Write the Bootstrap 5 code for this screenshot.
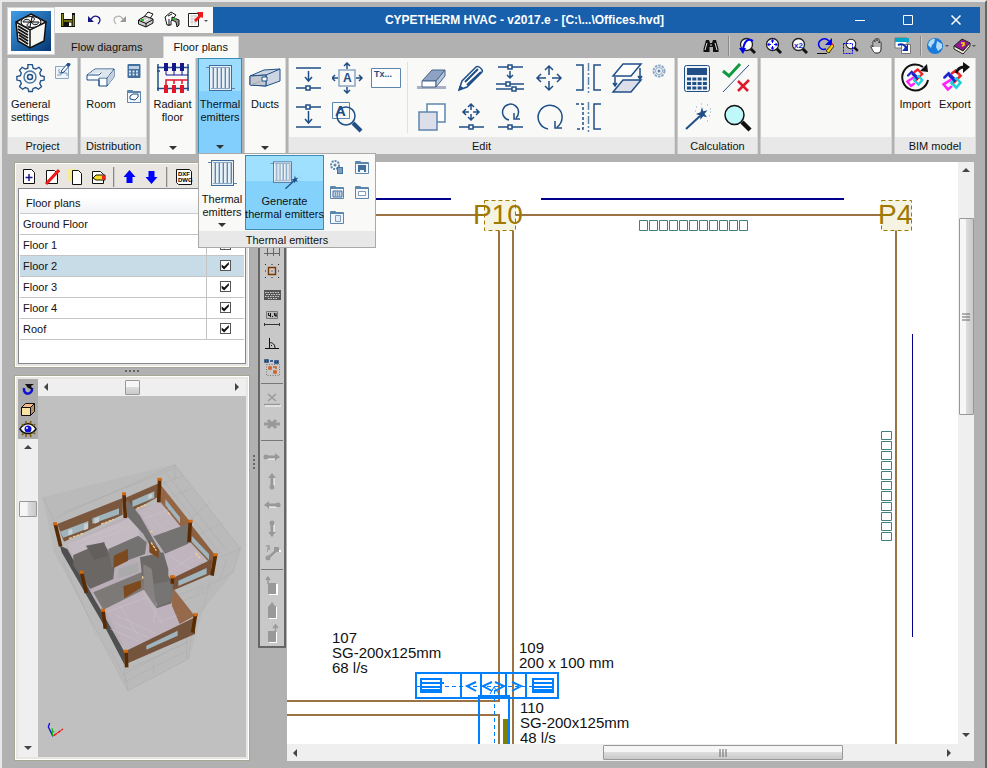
<!DOCTYPE html>
<html lang="en">
<head>
<meta charset="utf-8">
<meta name="viewport" content="width=device-width, initial-scale=1">
<title>CYPETHERM HVAC</title>
<link href="https://cdn.jsdelivr.net/npm/bootstrap@5.3.0/dist/css/bootstrap.min.css" rel="stylesheet">
<style>
:root{--ink:#1f4f86;--pane:#f9f9f8;--frame:#b1b1b1;--cap:#e8e8e8}
body{font-family:"Liberation Sans",sans-serif;font-size:11px;line-height:13px;color:#111;background:var(--frame);overflow:hidden}
button{border:0;background:none;padding:0;color:inherit;font:inherit}
svg{display:block;flex:none}
.shell{padding:5px 5px 7px 5px;border:2px solid #e8e8e8;border-right-color:#666;border-bottom:0}
.app-btn{width:48px;height:48px;background:#fff;border:1px solid #d6d6d6}
.quick{height:26px;width:158px;background:var(--pane)}
.quick button{width:26px;height:26px}
.title-strip{height:26px;background:#185fac;color:#fff;font-size:12px;font-weight:700}
.title-strip button{width:48px;height:26px}
.second-row{height:25px}
.tab-flow,.tab-floor{height:22px;padding:0 12px}
.tab-floor{background:var(--pane);border:1px solid #d8d8d8;border-bottom:0;padding:0 10px}
.view-tools button{width:26px;height:24px}
.view-tools .with-caret{width:27px}
.vbar{width:2px;height:20px;background:#8a8a8a;border-right:1px solid #ccc}
.ribbon{height:96px;gap:2px}
.rgroup{background:var(--pane);border-left:1px solid #ccc;border-right:1px solid #d9d9d9}
.rgroup .cap{height:17px;line-height:19px;background:var(--cap);text-align:center}
.big{padding-top:4px;display:flex;flex-direction:column;align-items:center;gap:4px}
.caret{width:0;height:0;border:4px solid transparent;border-top-color:#333;border-bottom:0}
.rgroup.on{background:linear-gradient(#9bdcff 0 34%,#82cffd 34%);border:1px solid #3c8cb6;border-bottom-color:#82cffd}
.drop{position:absolute;left:-1px;top:94px;width:178px;height:95px;z-index:5;background:var(--pane);border:1px solid #a9a9a9;text-align:center}
.drop .cap{height:16px;line-height:18px;background:var(--cap)}
.drop .big,.rgroup.on>.big{padding-top:3px}
.generate{width:79px;height:75px;margin-top:1px;background:linear-gradient(#9fe0ff 0 34%,#84d2fc 34%);border:1px solid #3c8cb6}
.mini-grid{display:grid;grid-template-columns:25px 25px;grid-auto-rows:25px;justify-items:center;align-items:center}
.edit-grid{display:grid;grid-auto-flow:column;grid-template-rows:32px 32px;grid-auto-columns:32px;gap:7px;padding-top:4px}
.workspace{padding:8px 6px 0 7px}
.pane-box{border:1px solid #a8a796;box-shadow:inset 0 0 0 1px #fff;background:#e9e6e1;padding:3px}
.floor-box{border:1px solid #82868f;background:#fff;padding:1px 1px 23px}
.floor-tools{height:22px;gap:7px;padding-left:3px}
.floor-table{width:100%}
.floor-table th{height:23px;font-weight:400;padding:4px 0 0 6px;background:linear-gradient(#fff 30%,#f1f2f5);border-bottom:1px solid #ccc}
.floor-table td{height:21px;padding:2px 0 0 3px;border-bottom:1px solid #c4c4c4}
.floor-table td+td{width:38px;border-left:1px solid #c4c4c4;text-align:center;padding:0}
.floor-table .sel td{background:#c8dce8}
.tick{appearance:none;width:11px;height:11px;border:1px solid #555;background:#fff;display:block;margin:0 auto}
.tick:checked::before{content:"";display:block;width:9px;height:9px;background:#111;clip-path:polygon(10% 40%,38% 62%,90% 10%,90% 38%,38% 94%,10% 70%)}
.grip{gap:2px}.grip i{width:2px;height:2px;background:#666}
.grip-row{padding:2px 0 3px}
.tool-strip{width:28px;margin-right:1px;background:#c8c8c8;border:1px solid #666;border-width:1px 2px 2px}
.tool-strip button{width:24px;height:24px;display:block}
.tool-strip hr{margin:4px 1px;height:1px;border:0;background:#777;opacity:1}
.sb{background:#efefef}
.sb button{width:17px;height:17px;display:flex;align-items:center;justify-content:center}
.sb .thumb{border:1px solid #989898;border-radius:1px;background:linear-gradient(#f6f6f6 0 45%,#dcdcdc 50%,#c9c9cb);display:flex;align-items:center;justify-content:center}
.sb-v .thumb{background:linear-gradient(90deg,#f6f6f6 0 45%,#dcdcdc 50%,#c9c9cb)}
.orbit{width:20px;background:#acacac}
.orbit button{width:20px;height:20px}
.scene{background:#c0c0c0}
.min0{min-width:0;min-height:0}
</style>
</head>
<body>
<svg width="0" height="0" class="position-absolute" aria-hidden="true">
<defs>
<g id="rad" fill="none" stroke="#1f4f86"><path d="M2 5.500H6M27 26.500H31" stroke="#5d86ad"/><rect x="5.500" y="3.500" width="22" height="25" fill="#e9f0f6" stroke="#3d6c9d"/><path d="M9.500 6v20M13.500 6v20M17.500 6v20M21.500 6v20M25.500 6v20" stroke="#5d86ad"/><path d="M8.500 6v20M12.500 6v20M16.500 6v20M20.500 6v20M24.500 6v20" stroke="#b4c8dc"/><path d="M7 5.500h19M7 26.500h19" stroke="#8aa6c2"/></g>
<g id="lens"><path d="M11 11l5 5" stroke="#111" stroke-width="3"/><circle cx="7.500" cy="7.500" r="6" fill="#fff" stroke="#222" stroke-width="1.300"/></g>
<g id="star" stroke="#1f4f86"><path d="M4 28L18 15" stroke-width="2"/><path d="M20 6l1.200 4.300 4.300-1-3 3.500 2.500 3.500-4-1-2.500 3.500-.5-4.300-4-1.500 4.500-1.700z" fill="#1f4f86" stroke="none"/><path d="M14 6h1M25 4h1M28 8h1M27 15h1M25 20h1M13 10h1M19 3h1M28 11h1" stroke="#7fa5c8"/></g>
<g id="win" fill="#f3f7fb" stroke="#5d86ad"><path d="M1.500 2.500h5l1 1h7v11h-13z"/><path d="M2 4h12" stroke-width="2"/></g>
<g id="bim" fill="none" stroke-width="3" stroke-linecap="round"><path d="M4 10l5-5 8 8-4 4" stroke="#22c"/><path d="M13 5l4-3 6 6-8 8" stroke="#e22"/><path d="M11 13l-8 5 5 6 4-3" stroke="#f2f"/><path d="M13 15l5-4 5 5-5 6-6-6" stroke="#1bd0d8"/><path d="M10 8l6 6" stroke="#22c"/></g>
</defs>
</svg>

<div class="shell vh-100 d-flex flex-column">
<header class="d-flex">
 <button class="app-btn d-flex align-items-center justify-content-center" aria-label="Application menu">
  <svg width="40" height="40" viewBox="0 0 40 40"><defs><linearGradient id="bg" x2="1" y2="1"><stop stop-color="#3f9de8"/><stop offset="1" stop-color="#053772"/></linearGradient></defs><rect width="40" height="40" fill="url(#bg)"/><path d="M20 3l15 8-2 19-14 7-12-7-2-19z" fill="#f7f7f4" stroke="#111" stroke-width="1.500"/><path d="M5 11l14 8 16-8M19 19v18" fill="none" stroke="#111" stroke-width="1.500"/><path d="M7 15l10 6M7 18l10 6M7 21l10 6M8 24l9 6M8 27l9 6" stroke="#111" stroke-width="1.800"/><ellipse cx="20" cy="11" rx="10" ry="5.500" fill="#fff" stroke="#111"/><path d="M20 11c-3-5-8-2-8 0zM20 11c3 5 8 2 8 0zM20 11c4-1 5-4 1-5zM20 11c-4 1-6 4-1 5z" fill="#ddd" stroke="#111"/></svg>
 </button>
 <div class="flex-grow-1">
  <div class="d-flex">
   <div class="quick d-flex align-items-center">
    <button class="d-flex align-items-center justify-content-center" aria-label="Save"><svg width="16" height="16"><path d="M1 1h14v14H1z" fill="#111"/><path d="M4 1h8v6H4z" fill="#fff"/><path d="M2.500 2v12M13.500 3v11M4 9h8" stroke="#8d8d12" stroke-width="1.500"/><path d="M9 10.500h2.500V14H9z" fill="#fff"/></svg></button>
    <button class="d-flex align-items-center justify-content-center" aria-label="Undo"><svg width="16" height="16"><path d="M4 8l3-3c3-2 7 0 7 3 0 2-1 3-2 4" fill="none" stroke="#15158c" stroke-width="1.300"/><path d="M2 4v6h6z" fill="#15158c"/></svg></button>
    <button class="d-flex align-items-center justify-content-center" aria-label="Redo" disabled><svg width="16" height="16"><path d="M12 8L9 5C6 3 2 5 2 8c0 2 1 3 2 4" fill="none" stroke="#b4b4b4" stroke-width="1.300"/><path d="M14 4v6H8z" fill="#999"/></svg></button>
    <button class="d-flex align-items-center justify-content-center" aria-label="Print"><svg width="18" height="18"><path d="M7 6l4-5 5 2-4 6z" fill="#fff" stroke="#111"/><path d="M1.500 9L8 5l8 3v4l-7 4-7.500-3z" fill="#ccc" stroke="#111"/><path d="M2 9.500l7 3 7-4M9 12v4" fill="none" stroke="#111"/><path d="M4 9h3" stroke="#1c1" stroke-width="2"/><path d="M7 10l4-2" stroke="#fff"/></svg></button>
    <button class="d-flex align-items-center justify-content-center" aria-label="Print preview"><svg width="18" height="18"><path d="M2 6l6-5 5 3-5 6v4H4z" fill="#fff" stroke="#111"/><path d="M9 6l7 3v5l-2 2-1-5-4-2z" fill="#999" stroke="#111"/><path d="M6 8v7M5 5l4-2" stroke="#111"/><path d="M11 8h2" stroke="#1b1" stroke-width="2"/></svg></button>
    <button class="d-flex align-items-center justify-content-center" aria-label="Export"><svg width="22" height="18"><path d="M1.500 2.500h10v13h-10z" fill="#fff" stroke="#222"/><path d="M3 5h7M3 8h7M3 11h7M5 4v10M8 4v10" stroke="#ccc"/><path d="M7 9l5-5-2-3h6v6l-2-1-5 5z" fill="#f01818"/><path d="M17 9h4l-2 2z" fill="#555"/></svg></button>
   </div>
   <div class="title-strip d-flex flex-grow-1 align-items-center">
    <div class="flex-grow-1 text-center">CYPETHERM HVAC - v2017.e - [C:\...\Offices.hvd]</div>
    <button class="d-flex align-items-center justify-content-center" aria-label="Minimize"><svg width="12" height="12"><path d="M1 6.500h10" stroke="#fff"/></svg></button>
    <button class="d-flex align-items-center justify-content-center" aria-label="Maximize"><svg width="12" height="12"><path d="M1.500 1.500h9v9h-9z" fill="none" stroke="#fff"/></svg></button>
    <button class="d-flex align-items-center justify-content-center" aria-label="Close"><svg width="12" height="12"><path d="M1.500 1.500l9 9M10.500 1.500l-9 9" stroke="#fff" stroke-width="1.500"/></svg></button>
   </div>
  </div>
  <div class="second-row d-flex justify-content-between">
   <nav class="d-flex align-items-end ps-1 gap-2" aria-label="Ribbon tabs">
    <button class="tab-flow">Flow diagrams</button>
    <button class="tab-floor">Floor plans</button>
   </nav>
   <div class="view-tools d-flex align-items-center">
    <button class="d-flex align-items-center justify-content-center" aria-label="Find"><svg width="16" height="16"><path d="M3 2h3l1 3h2l1-3h3l2.500 9v3H10V9H6.500v5H.5v-3z" fill="#111"/><path d="M4 5l-2 7M12 5l2 7M8 6v2" stroke="#ddd"/></svg></button>
    <div class="vbar mx-1"></div>
    <button class="d-flex align-items-center justify-content-center" aria-label="Previous zoom"><svg width="18" height="18"><use href="#lens" x="1"/><path d="M15 4C10 1 6 4 5 13" fill="none" stroke="#00e" stroke-width="2"/><path d="M1 11h7l-3 6z" fill="#00e"/></svg></button>
    <button class="d-flex align-items-center justify-content-center" aria-label="Zoom all"><svg width="18" height="18"><use href="#lens" x="1"/><path d="M8.500 3v3M8.500 9v3M4 7.500h3M10 7.500h3" stroke="#00e"/><path d="M8.500 2l2 2.500h-4zM8.500 13l2-2.500h-4zM3 7.500l2.500-2v4zM14 7.500l-2.500-2v4z" fill="#00e"/></svg></button>
    <button class="d-flex align-items-center justify-content-center" aria-label="Zoom times two"><svg width="18" height="18"><use href="#lens" x="1"/><text x="4" y="11" font-size="8" font-weight="700" fill="#22c">x2</text></svg></button>
    <button class="d-flex align-items-center justify-content-center" aria-label="Redraw"><svg width="18" height="18"><path d="M13 4C8-1 1 4 3 9c1 3 4 4 7 3" fill="none" stroke="#00e" stroke-width="1.500"/><path d="M16 1v7H9z" fill="#00e"/><path d="M10 14l6-7 2 2-5 7z" fill="#fc0" stroke="#111" stroke-width=".8"/><path d="M15 7l2-1 1 3z" fill="#e22"/><path d="M1 16.500h10" stroke="#111"/></svg></button>
    <button class="d-flex align-items-center justify-content-center" aria-label="Zoom window"><svg width="18" height="18"><g transform="translate(3 1) scale(.8)"><use href="#lens"/></g><path d="M1.500 6.500h9v10h-9z" fill="none" stroke="#00e" stroke-dasharray="2 1"/></svg></button>
    <button class="d-flex align-items-center justify-content-center" aria-label="Pan"><svg width="18" height="18"><path d="M5 10V5c0-2 2-2 2 0V3c0-2 2-2 2 0v1-1c0-2 2-2 2 0v3c0-2 2-2 2 0v6c0 3-2 4-3 4H8c-2 0-3-2-5-6 0-2 1-2 2 0z" fill="#fff" stroke="#222"/><path d="M7 5v5M9 4v6M11 5v5" stroke="#222" stroke-width=".7"/></svg></button>
    <button class="d-flex align-items-center justify-content-center" aria-label="Windows"><svg width="18" height="18"><path d="M1 1h12v10H1z" fill="#fff" stroke="#777"/><path d="M1 1h14v4H1z" fill="#00a6c8"/><path d="M7.500 7.500h9v9h-9z" fill="#fff" stroke="#777"/><path d="M4 8c4-2 7 0 8 3" fill="none" stroke="#0a2fae" stroke-width="2"/><path d="M14 7v7H8z" fill="#0a2fae"/></svg></button>
    <div class="vbar mx-1"></div>
    <button class="with-caret d-flex align-items-center" aria-label="Web"><svg width="26" height="18"><circle cx="9" cy="9" r="8" fill="#187ada"/><path d="M3 5c2-3 5-4 6-3l-1 4-2 2-1 3-3-3zM11 4l5 3v4l-4 3-2-4z" fill="#b7ddf5"/><path d="M19 8h4l-2 2z" fill="#555"/></svg></button>
    <button class="with-caret d-flex align-items-center" aria-label="Help"><svg width="26" height="18"><path d="M1 9l8-7 8 4-7 8z" fill="#921a92" stroke="#222"/><path d="M1 9v3l9 5 7-8V6l-7 8z" fill="#f1e9d9" stroke="#222"/><path d="M8 6h3v2l-2 1" fill="none" stroke="#fd0" stroke-width="1.500"/><path d="M19 8h4l-2 2z" fill="#555"/></svg></button>
   </div>
  </div>
 </div>
</header>

<div class="ribbon d-flex">
 <section class="rgroup d-flex flex-column" style="width:71px">
  <div class="d-flex flex-grow-1">
   <button class="big text-start align-items-start" style="padding-left:3px"><svg class="ms-1" width="32" height="32" viewBox="0 0 32 32"><path d="M13.500 3h5l1 4 3 1 3.500-2 3 3-2 3.500 1 3 4 1v4l-4 1-1 3 2 3.500-3.500 3-3-2-3 1-1 3.500h-4l-1-3.500-3-1-3 2-3.500-3 2-3.500-1-3-4-1v-4l4-1 1-3-2-3 3-3.500 3.500 2 3-1z" fill="none" stroke="#1f4f86" stroke-width="1.500" transform="translate(1 0) scale(.88)"/><circle cx="15" cy="15" r="6" fill="none" stroke="#4b7aa8" stroke-width="1.500"/><circle cx="15" cy="15" r="2.500" fill="none" stroke="#1f4f86" stroke-width="1.500"/></svg><span>General<br>settings</span></button>
   <button class="align-self-start mt-1 ms-1" aria-label="Edit project"><svg width="18" height="18"><path d="M1.500 4.500h13v12h-13z" fill="#f1f5f9" stroke="#8aa6c2"/><path d="M3 13h4v-3h3M5 7v4h8v3" fill="none" stroke="#7d9cbc"/><path d="M7 11l1-3 6-7 2 2-6 7z" fill="#fff" stroke="#1f4f86"/><path d="M12 3l3-2 2 1-3 3z" fill="#1f4f86"/></svg></button>
  </div><div class="cap">Project</div>
 </section>
 <section class="rgroup d-flex flex-column" style="width:67px">
  <div class="d-flex flex-grow-1 justify-content-between pe-1 ps-1">
   <button class="big"><svg width="32" height="32" viewBox="0 0 32 32"><path d="M2 13L10 7h19v8l-7 9H14v-6H2z" fill="#fbfcfe" stroke="#1f4f86"/><path d="M2 13h12l3-3M14 24v-8h8l7-9M22 16v8" fill="none" stroke="#1f4f86"/><path d="M3 12.500L10 7.500h18l-6 8h-8l3-5z" fill="#dde5ee"/><path d="M23 16l6-8v7l-6 8z" fill="#c4cfdd"/></svg><span>Room</span></button>
   <div class="d-flex flex-column gap-2 pt-1">
    <button aria-label="Room calculation"><svg width="16" height="18"><rect x="1.500" y="2" width="13" height="14" rx="1" fill="#42709f"/><path d="M3 4h10v3H3z" fill="#bcd0e2"/><path d="M3 9.500h10M3 12.500h10" stroke="#dbe6f0" stroke-width="2" stroke-dasharray="2 1.500"/></svg></button>
    <button aria-label="Room view"><svg width="16" height="16"><use href="#win"/><path d="M4 8l3-2h5v3l-3 3-5-1z" fill="#fff" stroke="#1f4f86"/></svg></button>
   </div>
  </div><div class="cap">Distribution</div>
 </section>
 <section class="rgroup d-flex" style="width:47px">
  <button class="big w-100"><svg width="34" height="32" viewBox="0 0 34 32"><path d="M1 5.500h32M1 26.500h32M2 2v27M32 2v27M1 9h3" stroke="#1f4f86" stroke-width="1.500"/><path d="M8 1h4v8H8zM16 1h4v8h-4zM24 1h4v8h-4z" fill="#15158c"/><path d="M10 9v4h22M18 9v4M26 9v4" fill="none" stroke="#15158c"/><path d="M8 23h4v8H8zM16 23h4v8h-4zM24 23h4v8h-4z" fill="#e4142b"/><path d="M10 23v-5h22M18 22v-4M26 22v-4" fill="none" stroke="#e4142b" stroke-width="1.500"/></svg><span>Radiant<br>floor</span><span class="caret mt-auto mb-1"></span></button>
 </section>
 <section class="rgroup on d-flex position-relative" style="width:44px">
  <button class="big w-100"><svg width="32" height="32"><use href="#rad"/></svg><span>Thermal<br>emitters</span><span class="caret mt-auto mb-1"></span></button>
  <div class="drop d-flex flex-column">
   <div class="d-flex flex-grow-1">
    <button class="big" style="width:46px"><svg width="32" height="32"><use href="#rad"/></svg><span>Thermal<br>emitters</span><span class="caret"></span></button>
    <button class="generate big"><svg width="32" height="32"><use href="#rad" transform="scale(.82)"/><use href="#star" transform="translate(14 13) scale(.6)"/></svg><span class="text-nowrap">Generate<br>thermal emitters</span></button>
    <div class="mini-grid">
     <button aria-label="Emitter options"><svg width="16" height="16"><circle cx="6" cy="6" r="4" fill="none" stroke="#5d86ad" stroke-width="2" stroke-dasharray="2 1"/><circle cx="6" cy="6" r="1.500" fill="#5d86ad"/><path d="M8 8h6v7H8z" fill="#42709f"/><path d="M10 9v5M12 9v5" stroke="#bcd"/></svg></button>
     <button aria-label="Emitter window one"><svg width="16" height="16"><use href="#win"/><path d="M4 6h8v7h-2v-2H6v2H4z" fill="#42709f"/></svg></button>
     <button aria-label="Emitter window two"><svg width="16" height="16"><use href="#win"/><path d="M4 7h9v6H4z" fill="#c3d3e3" stroke="#42709f"/><path d="M6.500 7v6M8.500 7v6M10.500 7v6" stroke="#7d9cbc"/></svg></button>
     <button aria-label="Emitter window three"><svg width="16" height="16"><use href="#win"/><path d="M4.500 7.500h7v4h-7z" fill="#fff" stroke="#7d9cbc"/></svg></button>
     <button aria-label="Emitter window four"><svg width="16" height="16"><use href="#win"/><path d="M6.500 6.500h5v6h-5z" fill="#e5edf5" stroke="#7d9cbc"/></svg></button>
    </div>
   </div>
   <div class="cap">Thermal emitters</div>
  </div>
 </section>
 <section class="rgroup d-flex" style="width:42px">
  <button class="big w-100"><svg width="32" height="32" viewBox="0 0 32 32"><path d="M1 14l14-6 16-1v12l-14 5-16-1z" fill="#ccd5e1" stroke="#1f4f86"/><path d="M1 14l16-1v11M17 13l14-6" fill="none" stroke="#1f4f86"/><path d="M1 14l16-1v11L1 23z" fill="#c2c6cf" stroke="#1f4f86"/><path d="M13 15h5v4h-5z" fill="#fff" stroke="#1f4f86"/><path d="M1 23l12-4" stroke="#aab"/></svg><span>Ducts</span><span class="caret mt-auto mb-1"></span></button>
 </section>
 <section class="rgroup d-flex flex-column" style="width:387px">
  <div class="d-flex flex-grow-1 ps-1">
   <div class="edit-grid">
    <button aria-label="Align down"><svg width="32" height="32" fill="none" stroke="#1f4f86" stroke-width="1.500"><path d="M3 6h25M3 26h10M17 26h11M15.500 9v9M12 15l3.500 4 3.500-4"/><path d="M13 24h4v4h-4z"/></svg></button>
    <button aria-label="Align to base"><svg width="32" height="32" fill="none" stroke="#1f4f86" stroke-width="1.500"><path d="M3 6h10M17 6h11M3 26h25M15.500 10v11M12 18l3.500 4 3.500-4"/><path d="M13 4h4v4h-4z"/></svg></button>
    <button aria-label="Move text"><svg width="32" height="32" fill="none" stroke="#1f4f86" stroke-width="1.500"><path d="M7 8h16v16H7z" stroke="#8aa6c2"/><path d="M15 1v6M12 4l3-3 3 3M15 31v-6M12 28l3 3 3-3M0 16h6M3 13l-3 3 3 3M30 16h-6M27 13l3 3-3 3"/><text x="11" y="20" font-size="12" font-weight="700" fill="#1f4f86" stroke="none">A</text></svg></button>
    <button aria-label="Find text"><svg width="32" height="32" fill="none" stroke="#1f4f86"><path d="M.5 1.500h17v16H.5z" stroke="#5d86ad"/><text x="3" y="15" font-size="15" font-weight="700" fill="#1f4f86" stroke="none">A</text><circle cx="14" cy="15" r="9" stroke-width="1.500"/><path d="M21 22l8 8" stroke-width="4"/></svg></button>
    <button aria-label="Text"><svg width="32" height="32"><path d="M.5 6.500h29v19H.5z" fill="#fdfdfd" stroke="#5d86ad"/><text x="3" y="15" font-size="9" font-weight="700" fill="#1f4f86">Tx...</text></svg></button>
   </div>
   <div class="border-start my-1 ms-1 me-2"></div>
   <div class="edit-grid">
    <button aria-label="Delete"><svg width="32" height="32"><path d="M1 25.500h29" stroke="#a9b0c6" stroke-width="3"/><path d="M6 19L16 8h13l-9 11z" fill="#8fa2c4" stroke="#46658c"/><path d="M6 19h14v6H6z" fill="#fff" stroke="#46658c"/><path d="M20 19l9-11v6l-9 11z" fill="#b8c4d8" stroke="#46658c"/></svg></button>
    <button aria-label="Copy"><svg width="32" height="32" stroke="#5d86ad" stroke-width="1.500"><path d="M11 3h18v18H11z" fill="#fff"/><path d="M3 11h18v18H3z" fill="#dcdee9"/></svg></button>
    <button aria-label="Edit"><svg width="32" height="32" stroke="#1f4f86"><path d="M4 28l3-9L21 5c2-2 8 3 6 5L12 25z" fill="#fff" stroke-width="1.500"/><path d="M10 20L23 7M12 23L26 10" stroke-width="2"/><path d="M4 28l1-4 3 2z" fill="#1f4f86"/></svg></button>
    <button aria-label="Move node"><svg width="32" height="32" fill="none" stroke="#1f4f86" stroke-width="1.500"><path d="M16 9V3M13 6l3-3 3 3M16 13v6M13 16l3 3 3-3M14 11H8M11 8l-3 3 3 3M18 11h6M21 8l3 3-3 3M4 26h10M18 26h11"/><path d="M14 24h4v4h-4z"/></svg></button>
    <button aria-label="Move segment"><svg width="32" height="32" fill="none" stroke="#1f4f86" stroke-width="1.500"><path d="M4 5h10M18 5h11M16 9v7M13 13l3 3 3-3M2 22h10M16 22h14M2 27h16M22 27h8"/><path d="M14 3h4v4h-4zM12 20h4v4h-4zM18 25h4v4h-4z"/></svg></button>
    <button aria-label="Rotate element"><svg width="32" height="32" fill="none" stroke="#1f4f86" stroke-width="1.500"><path d="M15 19a8 8 0 1 1 7-2M20 12v6h6M4 26h10M18 26h11"/><path d="M14 24h4v4h-4z"/></svg></button>
    <button aria-label="Move"><svg width="32" height="32" fill="none" stroke="#1f4f86" stroke-width="1.500"><path d="M16 13V4M12 8l4-4 4 4M16 19v9M12 24l4 4 4-4M13 16H4M8 12l-4 4 4 4M19 16h9M24 12l4 4-4 4"/></svg></button>
    <button aria-label="Rotate"><svg width="32" height="32" fill="none" stroke="#1f4f86" stroke-width="1.500"><path d="M15 28a12 12 0 1 1 9-2M22 20v7h7"/></svg></button>
    <button aria-label="Mirror"><svg width="32" height="32" fill="none" stroke="#1f4f86" stroke-width="1.500"><path d="M4 3h7v25H4M29 3h-7v25h7"/><path d="M16.500 1v30" stroke="#5d86ad" stroke-dasharray="8 2 2 2"/></svg></button>
    <button aria-label="Mirror copy"><svg width="32" height="32" fill="none" stroke="#1f4f86" stroke-width="1.500"><path d="M4 3h7v25H4" stroke-dasharray="3 2"/><path d="M29 3h-7v25h7"/><path d="M16.500 1v30" stroke="#5d86ad" stroke-dasharray="8 2 2 2"/></svg></button>
    <button aria-label="Copy between floors"><svg width="32" height="32" stroke="#1f4f86" fill="none"><path d="M2 14L12 2h18L20 14z" fill="#fff" stroke-width="1.500"/><path d="M2 30l10-12h18L20 30z" fill="#dcdee9" stroke-width="1.500"/><path d="M29 6v11M27 14l2 3 2-3M4 15v9M2 21l2 3 2-3" stroke-width="1.500"/></svg></button>
   </div>
   <button class="align-self-start ms-2 pt-1" aria-label="Edit settings"><svg width="16" height="18"><circle cx="8" cy="9" r="5.500" fill="none" stroke="#8aa6c2" stroke-width="2" stroke-dasharray="2.500 1"/><circle cx="8" cy="9" r="3.500" fill="none" stroke="#8aa6c2"/><circle cx="8" cy="9" r="1.500" fill="#5d86ad"/></svg></button>
  </div><div class="cap">Edit</div>
 </section>
 <section class="rgroup d-flex flex-column" style="width:81px">
  <div class="d-flex flex-grow-1 justify-content-center">
   <div class="edit-grid">
    <button aria-label="Calculate"><svg width="32" height="32"><rect x="2.500" y="3.500" width="25" height="26" rx="2" fill="#eef3f8" stroke="#1f4f86"/><path d="M5 6h20v7H5z" fill="#1f4f86"/><path d="M5 17h20M5 21.500h20M5 26h20" stroke="#1f4f86" stroke-width="3" stroke-dasharray="4 1.300"/></svg></button>
    <button aria-label="Wizard"><svg width="32" height="32"><use href="#star"/></svg></button>
    <button aria-label="Check"><svg width="32" height="32" fill="none"><path d="M2 30L28 3" stroke="#1f4f86"/><path d="M2 9l6 5L19 2" stroke="#0f9a3f" stroke-width="3"/><path d="M17 19l10 10M28 18L17 29" stroke="#e0182d" stroke-width="2.500"/></svg></button>
    <button aria-label="View results"><svg width="32" height="32"><path d="M21 21l8 8" stroke="#111" stroke-width="4.500"/><circle cx="13.500" cy="14" r="9.500" fill="#bff8fb" stroke="#111" stroke-width="1.500"/></svg></button>
   </div>
  </div><div class="cap">Calculation</div>
 </section>
 <section class="rgroup d-flex flex-column flex-grow-1"><div class="flex-grow-1"></div><div class="cap"></div></section>
 <section class="rgroup d-flex flex-column me-1" style="width:82px">
  <div class="d-flex flex-grow-1 justify-content-around">
   <button class="big"><svg width="32" height="32"><path d="M24 5A13 13 0 1 0 29 18" fill="none" stroke="#111" stroke-width="2"/><path d="M21 9l8 1-1-8z" fill="#111"/><use href="#bim" transform="translate(6 6) scale(.75)"/></svg><span>Import</span></button>
   <button class="big"><svg width="32" height="32"><use href="#bim" transform="translate(2 7) scale(.85)"/><path d="M17 11c2-5 5-6 8-6" fill="none" stroke="#111" stroke-width="3"/><path d="M24 0l7 5-7 6z" fill="#111"/></svg><span>Export</span></button>
  </div><div class="cap">BIM model</div>
 </section>
</div>

<main class="workspace d-flex flex-grow-1 min0">
 <aside class="d-flex flex-column min0" style="width:236px">
  <section class="pane-box">
   <div class="floor-tools d-flex align-items-center">
    <button aria-label="New floor"><svg width="16" height="18"><path d="M2.500 1.500h8l3 3v11h-11z" fill="#fff" stroke="#111"/><path d="M8 6v7M4.500 9.500h7" stroke="#15158c" stroke-width="1.500"/></svg></button>
    <button aria-label="Delete floor"><svg width="16" height="18"><path d="M2.500 2.500h8l3 3v10h-11z" fill="#fff" stroke="#111"/><path d="M2 16L15 2" stroke="#f01818" stroke-width="3"/></svg></button>
    <button aria-label="Copy floor"><svg width="16" height="18"><path d="M1 1h7v12H1z" fill="#f3ec92"/><path d="M5.500 2.500h6l3 3v11h-9z" fill="#fff" stroke="#111"/></svg></button>
    <button aria-label="Edit floor"><svg width="16" height="18"><path d="M2.500 3.500h8l3 3v9h-11z" fill="#fff" stroke="#111"/><path d="M3 10l3-3h9v5H6z" fill="#f5dc20" stroke="#111"/><path d="M12 7.500h3v4h-3z" fill="#e22"/></svg></button>
    <div class="vbar"></div>
    <button aria-label="Move up"><svg width="15" height="18"><path d="M7.500 2l6 7h-3v6h-6V9h-3z" fill="#00f"/></svg></button>
    <button aria-label="Move down"><svg width="15" height="18"><path d="M7.500 16l6-7h-3V3h-6v6h-3z" fill="#00f"/></svg></button>
    <div class="vbar"></div>
    <button aria-label="DXF and DWG templates"><svg width="18" height="18"><path d="M1.500 1.500h13l2 2v13h-13l-2-2z" fill="#fff" stroke="#111"/><text x="3" y="8" font-size="6" font-weight="700">DXF</text><text x="3" y="14" font-size="6" font-weight="700">DWG</text></svg></button>
   </div>
   <div class="floor-box">
    <table class="floor-table">
     <thead><tr><th colspan="2" scope="col">Floor plans</th></tr></thead>
     <tbody>
      <tr><td><label for="f0">Ground Floor</label></td><td><input class="tick" id="f0" type="checkbox" checked></td></tr>
      <tr><td><label for="f1">Floor 1</label></td><td><input class="tick" id="f1" type="checkbox" checked></td></tr>
      <tr class="sel"><td><label for="f2">Floor 2</label></td><td><input class="tick" id="f2" type="checkbox" checked></td></tr>
      <tr><td><label for="f3">Floor 3</label></td><td><input class="tick" id="f3" type="checkbox" checked></td></tr>
      <tr><td><label for="f4">Floor 4</label></td><td><input class="tick" id="f4" type="checkbox" checked></td></tr>
      <tr><td><label for="f5">Roof</label></td><td><input class="tick" id="f5" type="checkbox" checked></td></tr>
     </tbody>
    </table>
   </div>
  </section>
  <div class="grip grip-row d-flex justify-content-center"><i></i><i></i><i></i><i></i></div>
  <section class="pane-box flex-grow-1 d-flex min0">
   <div class="d-flex flex-column">
    <div class="orbit">
     <button class="d-flex align-items-center justify-content-center" aria-label="Reset view"><svg width="16" height="16"><path d="M4 7c-1 8 9 7 8 0" fill="none" stroke="#1010d0" stroke-width="2.500"/><path d="M5 3h9l-3 2 2 4-5-2z" fill="#111"/></svg></button>
     <button class="d-flex align-items-center justify-content-center" aria-label="Solid view"><svg width="16" height="16"><path d="M1.500 6.500h9v8h-9z" fill="#fbe3a4" stroke="#111"/><path d="M1.500 6.500l4-4h9l-4 4z" fill="#f5b888" stroke="#111"/><path d="M10.500 14.500v-8l4-4v8z" fill="#b99463" stroke="#111"/></svg></button>
     <button class="d-flex align-items-center justify-content-center" aria-label="Visibility"><svg width="18" height="18"><path d="M1 9c4-7 12-7 16 0-4 6-12 6-16 0z" fill="#fff" stroke="#111" stroke-width="1.500"/><circle cx="9" cy="9" r="3.500" fill="#1010d0"/><circle cx="8" cy="8" r="1" fill="#fff"/><path d="M3 4l2 2M7 1v3M12 1l-1 3M16 4l-2 2M3 15l2-2M7 17v-3M12 17l-1-3M16 14l-2-2" stroke="#7c5b08" stroke-width="1.500"/></svg></button>
    </div>
    <div class="sb sb-v d-flex flex-column flex-grow-1 align-items-center">
     <button aria-label="Tilt up"><svg width="8" height="5"><path d="M4 0l4 4H0z" fill="#444"/></svg></button>
     <div style="flex:45"></div><div class="thumb" style="height:16px;width:18px"></div><div style="flex:221"></div>
     <button aria-label="Tilt down"><svg width="8" height="5"><path d="M0 0h8L4 4z" fill="#444"/></svg></button>
    </div>
   </div>
   <div class="d-flex flex-column flex-grow-1 min0">
    <div class="sb d-flex align-items-center">
     <button aria-label="Turn left"><svg width="5" height="8"><path d="M4 0v8L0 4z" fill="#444"/></svg></button>
     <div style="flex:70"></div><div class="thumb" style="width:15px;height:15px"></div><div style="flex:88"></div>
     <button aria-label="Turn right"><svg width="5" height="8"><path d="M0 0v8l4-4z" fill="#444"/></svg></button>
    </div>
    <div class="scene flex-grow-1 min0">
    <svg width="100%" height="100%" role="img" aria-label="3D building view"><g transform="translate(-28 53) scale(.33333)">
     <path d="M98 145L495 45l198 254-24 72-90 112-42 147-183 97L130 300z" fill="#999" fill-opacity=".15"/>
     <g fill="none" stroke="#a6a6a6" stroke-width="2" opacity=".55"><path d="M98 145l38 80M140 205L495 48l196 250-70 32M495 48v45M520 80l-90 35M540 120l-90 40M600 160l-60 50M640 220l-80 40M691 298l-22 72-110 60M600 390l-20 90-30 15M545 555l-10 75-182 95-12-70M353 725L130 300M340 700l190-95M335 680l200-105M160 340l100 220M300 600l55 105M470 75l180 230M460 95l170 220M160 190l330-130M500 440l80-30M505 460l78-30M345 665l190-85M430 640v35M530 560v70M650 330l-20 60"/></g>
     <path d="M170 285L345 205l45-30 90-15 110 125-15 60-90 30-15 60 40 65-175 90-70-115-80-150z" fill="#b8aeb6"/>
     <path d="M170 285l205-85 15 60-90 45-110 20z" fill="#c4bac2"/><path d="M385 185l60-25 85 65-95 40z" fill="#c0b6be"/><path d="M465 310l78-30 45 50-60 40-60 20z" fill="#c0b5bf"/><path d="M285 480l120-58 33 52 45-15 45 60-175 90z" fill="#beb3bd"/>
     <path d="M315 358l75-25 5 45-75 20zM245 420l75-45v25l-70 30z" fill="#b9adb8"/><path d="M325 360l60-20v30l-60 18z" fill="#aaa"/>
     <path d="M142 225l196-78v50L162 278z" fill="#7b573e"/><path d="M345 147l103-45v40L360 190z" fill="#7b573e"/><path d="M450 105l88 110v50l-90-110z" fill="#946646"/><path d="M542 225l75 95-10 30-70-75z" fill="#8b6142"/><path d="M487 388l118-57v44l-118 50z" fill="#7a523a"/><path d="M487 415l67 85-45 25-23-55z" fill="#95694a"/><path d="M349 605l206-100v50L353 643z" fill="#75543d"/>
     <path d="M150 248l85-32v22l-75 28zM247 208l80-30v18l-80 28zM367 155l66-28v20l-66 27zM466 150l44 55v18l-44-55zM545 260l52 55v18l-52-55zM505 395l85-38v18l-85 36zM409 590l94-45v15l-94 42z" fill="#9fb4bd"/>
     <path d="M222 226l12-5v18l-12 5zM253 210l14-6v15l-14 5zM175 243l12-4v16l-12 4zM415 138l12-5v12l-12 5z" fill="#c9cfd1"/>
     <path d="M150 290l22 10 78 145 24 40 70 125v38L285 535 155 310z" fill="#4f4f4f"/>
     <path d="M190 318l90-38 35 60-5 50-70 30-50-70z" fill="#6a6764"/><path d="M295 300l90-40 25 20-5 35-55 20-45 20z" fill="#747270"/><path d="M250 430l155-65v55l-125 62z" fill="#7c7976"/><path d="M350 150l40 50 65 115-10 20-45-80-50-55z" fill="#6f6e6d"/><path d="M430 262l105-38v60l-70 30-20-30z" fill="#747372"/><path d="M390 325l70-15 15 50v20l15 25-5 58-45 15-40-60z" fill="#6c6967"/><path d="M400 345l25 15 15 118-40-60z" fill="#858281"/><path d="M430 405l55-10v60l-45 20z" fill="#777574"/><path d="M228 290l55-10 10 40-40 12z" fill="#625f5d"/>
     <path d="M311 320l43-20v35l-43 22zM340 412l53-18v22l-50 32zM418 275l28 25v28l-28-18z" fill="#7d4a1f"/>
     <path d="M300 540l85 35M310 520l105 45M320 500l120 55M200 280l130-50M210 290l140-50M400 430l60 100M430 520l10-60M440 520l60-20M290 490l120-45M330 470l60 100M410 190l60 60M400 210l80-30M480 320l60 40M490 360l60-40" stroke="#d2cad0" stroke-width="2" opacity=".6"/>
     <path d="M177 269l42-16M273 226l38-15M380 179l28-12M474 190l8 10M556 312l14 16M420 248h8M423 280l16 25M398 382v7" stroke="#f1cf94" stroke-width="4" stroke-dasharray="9 3"/>
     <g stroke="#592b05" stroke-width="11"><path d="M135 222l17 70M214 368l15 64M279 482l7 57M348 605l2 50M342 135l4 72M449 90l-3 70M541 215l-4 65M617 316l-11 64M487 380v24M557 495l-9 56"/></g>
     <g stroke="#d4690e" stroke-width="9"><path d="M129 224h12M209 370h12M273 484h12M341 607h13M336 134h12M442 91h13M535 217h13M610 317h13M481 383h13M551 497h13"/></g>
     <path d="M129 862l-14-28 4-12" fill="none" stroke="#11d" stroke-width="4"/><path d="M127 860v-22M123 848h10" stroke="#1b1" stroke-width="4"/><path d="M131 860l28-20" stroke="#e11" stroke-width="4" stroke-dasharray="12 2"/>
    </g></svg>
    </div>
   </div>
  </section>
 </aside>

 <div class="d-flex flex-column justify-content-center align-items-center" style="width:8px"><div class="grip d-flex flex-column"><i></i><i></i><i></i><i></i></div></div>

 <div class="tool-strip align-self-start" role="toolbar" aria-label="Drawing aids">
  <button aria-label="Snap endpoint"></button><button aria-label="Snap midpoint"></button><button aria-label="Snap line"></button>
  <button aria-label="Grid"><svg width="24" height="24" stroke="#666"><path d="M4 6.500h16M4 12.500h16M4 18.500h16M7.500 3v18M13.500 3v18M19.500 3v18"/></svg></button>
  <button aria-label="Snap to grid"><svg width="24" height="24"><path d="M8.500 8.500h7v7h-7z" fill="none" stroke="#7b3b04" stroke-width="1.500"/><path d="M5 5.500h14M5 18.500h14M5 12h14" stroke="#222" stroke-dasharray="1 5.500"/></svg></button>
  <button aria-label="Keyboard entry"><svg width="24" height="24"><path d="M4 7h17v10H4z" fill="#555"/><path d="M5 9.500h14M6 11.500h14M5 13.500h14M8 15.500h9" stroke="#ccc" stroke-dasharray="1.500 1"/></svg></button>
  <button aria-label="Dimensions"><svg width="24" height="24"><path d="M6.500 4.500h11v7h-11z" fill="#bbb" stroke="#777"/><path d="M8.500 6v2.500h2M10.500 6v4M12 9.500h1M14.500 6v2.500h2M16 6v4" fill="none" stroke="#111"/><path d="M4 17.500h16M4.500 16v3M19.500 16v3" stroke="#333"/></svg></button>
  <button aria-label="Orthogonal"><svg width="24" height="24" fill="none" stroke="#111"><path d="M5 17.500h14M9.500 17V7M9 11.500c4 0 6 2 6 6"/><path d="M11 14.500h1"/></svg></button>
  <button aria-label="Repeat"><svg width="24" height="24" fill="none" stroke-width="1.500"><path d="M5 5h3v2H5zM15 6h3v2h-3zM10 6h3" stroke="#123f77"/><path d="M6.500 9.500h13v11h-13z" stroke="#777" stroke-dasharray="1 1.500" stroke-width="1"/><path d="M9 12h2v2H9zM14 16h2v2h-2zM13 12h3v2" stroke="#d05c23"/></svg></button>
  <hr>
  <button aria-label="Break" disabled><svg width="24" height="24" stroke="#999" stroke-width="1.500"><path d="M8 6l8 7M16 6l-8 7M4 16.500h16"/><path d="M5 18h16" stroke="#fff" stroke-width="1"/></svg></button>
  <button aria-label="Join" disabled><svg width="24" height="24" stroke="#999" stroke-width="3"><path d="M4 12h16M8 8l8 8M16 8l-8 8"/></svg></button>
  <hr>
  <button aria-label="Arrow right" disabled><svg width="24" height="24"><path d="M6 13h12" stroke="#fff" stroke-width="3"/><path d="M6 12h10" stroke="#999" stroke-width="3"/><circle cx="6" cy="12" r="2.500" fill="#999"/><path d="M15 8l5 4-5 4z" fill="#999"/></svg></button>
  <button aria-label="Arrow up" disabled><svg width="24" height="24"><path d="M13 7v12" stroke="#fff" stroke-width="3"/><path d="M12 8v10" stroke="#999" stroke-width="3"/><circle cx="12" cy="18" r="2.500" fill="#999"/><path d="M8 9l4-5 4 5z" fill="#999"/></svg></button>
  <button aria-label="Arrow left" disabled><svg width="24" height="24"><path d="M6 13h13" stroke="#fff" stroke-width="3"/><path d="M8 12h10" stroke="#999" stroke-width="3"/><circle cx="18" cy="12" r="2.500" fill="#999"/><path d="M9 8l-5 4 5 4z" fill="#999"/></svg></button>
  <button aria-label="Arrow down" disabled><svg width="24" height="24"><path d="M13 6v12" stroke="#fff" stroke-width="3"/><path d="M12 6v10" stroke="#999" stroke-width="3"/><circle cx="12" cy="6" r="2.500" fill="#999"/><path d="M8 15l4 5 4-5z" fill="#999"/></svg></button>
  <button aria-label="Identify" disabled><svg width="24" height="24"><path d="M7 19l10-9h4" stroke="#fff" fill="none" stroke-width="2"/><path d="M7 18l9-8" stroke="#999" stroke-width="3"/><path d="M14 6h5v5h-5z" fill="#999"/><circle cx="8" cy="17" r="2.500" fill="#999"/><path d="M6 5h3v3H7M7 10h1" fill="none" stroke="#999" stroke-width="1.500"/></svg></button>
  <hr>
  <button aria-label="Raise left" disabled><svg width="24" height="24"><path d="M9 10h9v11H9z" fill="#fff"/><path d="M8 9h8v11H8z" fill="#999"/><path d="M8 10V4M6 6l2-3 2 3" stroke="#999" fill="none" stroke-width="1.500"/></svg></button>
  <button aria-label="Raise centre" disabled><svg width="24" height="24"><path d="M9 9h8v12H9z" fill="#fff"/><path d="M8 8h8v12H8z" fill="#999"/><path d="M9 8l3-4 3 4z" fill="#999"/></svg></button>
  <button aria-label="Raise right" disabled><svg width="24" height="24"><path d="M9 10h8v11H9z" fill="#fff"/><path d="M8 9h8v11H8z" fill="#999"/><path d="M15.500 10V4M13 6l2.500-3L18 6" stroke="#999" fill="none" stroke-width="1.500"/></svg></button>
 </div>

 <div class="d-flex flex-column flex-grow-1 min0">
  <div class="d-flex flex-grow-1 min0">
   <div class="flex-grow-1 bg-white min0">
   <svg width="100%" height="100%" role="img" aria-label="Floor plan"><g transform="translate(-287 -162)">
    <g fill="none" stroke="#9c7444" stroke-width="2"><path d="M286 215H499M515 215H881M499 231V701H286M286 715H499V800M513 231V800M896 230V800"/></g>
    <path d="M286 199H451M541 199H844" stroke="#00008b" stroke-width="2"/><path d="M912.500 334V637" stroke="#00008b"/>
    <g fill="#f5f3e2" stroke="#a07800" stroke-dasharray="4 3"><path d="M484.500 200.500h31v30h-31zM881.500 200.500h30v30h-30z"/></g>
    <g font-size="28" fill="#a07800"><text x="473" y="224">P10</text><text x="878" y="224">P4</text></g>
    <g fill="none" stroke="#408080"><path d="M639.500 220.500h8v10h-8zm10 0h8v10h-8zm10 0h8v10h-8zm10 0h8v10h-8zm10 0h8v10h-8zm10 0h8v10h-8zm10 0h8v10h-8zm10 0h8v10h-8zm10 0h8v10h-8zm10 0h8v10h-8zm10 0h8v10h-8z"/><path d="M881.500 431.500h10v8h-10zm0 10h10v8h-10zm0 10h10v8h-10zm0 10h10v8h-10zm0 10h10v8h-10zm0 10h10v8h-10zm0 10h10v9h-10zm0 11h10v8h-10zm0 10h10v8h-10zm0 10h10v8h-10zm0 10h10v8h-10z"/></g>
    <path d="M503 719h5v81h-5z" fill="#808000"/>
    <g fill="none" stroke="#0080ff" stroke-width="2"><path d="M416 673h142v25H416zM461 673v25M481 673v25M506 673v25M526 673v25M479 800V696h30v104M421 679h20v13h-20zM533 679h20v13h-20zM422 683h22M422 687h20M422 690h20M534 683h18M534 687h18M534 690h18M476 682l-9 4 9 5M492 682l-9 4 9 5M495 682l9 4-9 5M512 682l9 4-9 5"/><path d="M417 686.500h140M494.500 690v110" stroke-width="1" stroke-dasharray="4 3"/><path d="M490 694l4-7 5 7" stroke-width="1"/></g>
    <g font-size="15" fill="#111"><text x="332" y="643">107</text><text x="332" y="658">SG-200x125mm</text><text x="332" y="673">68 l/s</text><text x="519" y="653">109</text><text x="519" y="668">200 x 100 mm</text><text x="520" y="713">110</text><text x="520" y="728">SG-200x125mm</text><text x="520" y="743">48 l/s</text></g>
   </g></svg>
   </div>
   <div class="sb sb-v d-flex flex-column align-items-center" style="width:16px">
    <button aria-label="Scroll up"><svg width="8" height="5"><path d="M4 0l4 4H0z" fill="#444"/></svg></button>
    <div style="flex:39"></div><div class="thumb" style="height:197px;width:15px"><svg width="8" height="8"><path d="M0 1h8M0 4h8M0 7h8" stroke="#666"/></svg></div><div style="flex:312"></div>
    <button aria-label="Scroll down"><svg width="8" height="5"><path d="M0 0h8L4 4z" fill="#444"/></svg></button>
   </div>
  </div>
  <div class="sb d-flex align-items-center pe-3">
   <button aria-label="Scroll left"><svg width="5" height="8"><path d="M4 0v8L0 4z" fill="#444"/></svg></button>
   <div style="flex:300"></div><div class="thumb" style="width:240px;height:15px"><svg width="8" height="8"><path d="M1 0v8M4 0v8M7 0v8" stroke="#666"/></svg></div><div style="flex:98"></div>
   <button aria-label="Scroll right"><svg width="5" height="8"><path d="M0 0v8l4-4z" fill="#444"/></svg></button>
  </div>
 </div>
</main>
</div>
<script src="https://cdn.jsdelivr.net/npm/bootstrap@5.3.0/dist/js/bootstrap.bundle.min.js"></script>
</body>
</html>
